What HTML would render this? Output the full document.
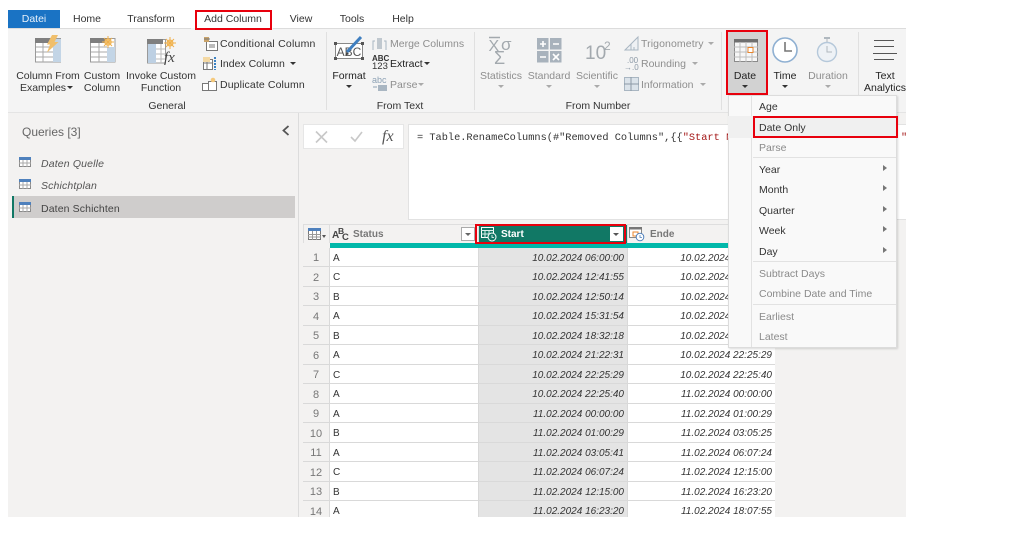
<!DOCTYPE html>
<html><head><meta charset="utf-8"><style>
*{box-sizing:border-box}
html,body{margin:0;padding:0;background:#fff}
body{width:1024px;height:535px;position:relative;overflow:hidden;font-family:"Liberation Sans",sans-serif;font-size:10.5px;color:#333}
.a{position:absolute}
.t{position:absolute;white-space:nowrap;line-height:12px;margin-top:1px}
.c{text-align:center;transform:translateX(-50%)}
.g{color:#8e8e8e}
.rr{position:absolute;border:2px solid #e8000d}
svg{position:absolute;overflow:visible}
.row{position:absolute;left:303px;width:472px;height:19px;background:#d9d9d9}
.x{height:20px}
.row div{position:absolute;top:0;height:18px;line-height:21px;font-size:10px;white-space:nowrap;color:#333}
.x div{height:19px;line-height:22px}
.n{left:0;width:26px;background:#f3f2f1;text-align:center;font-size:11px!important;color:#777!important}
.s{left:27px;width:148px;background:#fff;padding-left:3px}
.d{left:176px;width:148px;background:#e4e4e4;text-align:right;padding-right:3px;font-style:italic}
.e{left:325px;width:147px;background:#fff;text-align:right;padding-right:3px;font-style:italic}
.m{position:absolute;left:759px;white-space:nowrap;line-height:12px;font-size:10.5px;color:#333;margin-top:1px}
.mg{color:#8a8a8a}
.ar{position:absolute;left:883px;width:0;height:0;border-left:4px solid #777;border-top:3.5px solid transparent;border-bottom:3.5px solid transparent}
.sep{position:absolute;left:753px;width:143px;height:1px;background:#e2e2e2}
.dn{position:absolute;width:0;height:0;border-top:3px solid #333;border-left:3px solid transparent;border-right:3px solid transparent}
.dg{border-top-color:#aaa}
.vs{position:absolute;top:32px;width:1px;height:78px;background:#e0e0e0}
</style></head><body>

<!-- tab row -->
<div class="a" style="left:8px;top:10px;width:52px;height:18px;background:#1a73c4"></div>
<div class="t c" style="left:34px;top:12px;color:#e8f1fa">Datei</div>
<div class="t c" style="left:87px;top:12px">Home</div>
<div class="t c" style="left:151px;top:12px">Transform</div>
<div class="t c" style="left:233px;top:12px">Add Column</div>
<div class="t c" style="left:301px;top:12px">View</div>
<div class="t c" style="left:352px;top:12px">Tools</div>
<div class="t c" style="left:403px;top:12px">Help</div>

<!-- ribbon -->
<div class="a" style="left:8px;top:28px;width:898px;height:85px;background:#f4f4f4;border-top:1px solid #dcdcdc;border-bottom:1px solid #e4e4e4"></div>
<div class="a" style="left:191px;top:28px;width:82px;height:2px;background:#f4f4f4"></div>
<div class="vs" style="left:326px"></div>
<div class="vs" style="left:474px"></div>
<div class="vs" style="left:721px"></div>
<div class="vs" style="left:858px"></div>

<!-- Column from examples icon -->
<svg style="left:35px;top:35px" width="27" height="28" viewBox="0 0 27 28"><rect x="0.5" y="3.5" width="25" height="23.5" fill="#fff" stroke="#9a9a9a"/><rect x="0" y="3" width="17" height="5" fill="#7f7f7f"/><rect x="18" y="4" width="8" height="23" fill="#c3d5e6"/><path d="M1 12H18M1 17H18M1 22H18M8 8V27" stroke="#aaa"/><path d="M17 0H23L19.5 7H23.5L12 17.5L15 9.5H12Z" fill="#f0bf6c"/></svg>
<!-- Custom column icon -->
<svg style="left:89px;top:35px" width="27" height="28" viewBox="0 0 27 28"><rect x="1.5" y="3.5" width="24.5" height="23.5" fill="#fff" stroke="#9a9a9a"/><rect x="1" y="3" width="17" height="5" fill="#7f7f7f"/><rect x="18" y="12" width="8" height="15" fill="#c3d5e6"/><path d="M2 12H18M2 17H18M2 22H18M10 8V27" stroke="#aaa"/><circle cx="19" cy="7" r="3.2" fill="#fbe3b2" stroke="#efb04c"/><path d="M19 1V13M13 7H25M15 3L23 11M23 3L15 11" stroke="#efb04c"/></svg>
<!-- Invoke icon -->
<svg style="left:147px;top:35px" width="30" height="29" viewBox="0 0 30 29"><rect x="0.5" y="4.5" width="18" height="23.5" fill="#fff" stroke="#9a9a9a"/><rect x="0" y="4" width="16" height="5" fill="#7f7f7f"/><rect x="1" y="9" width="8" height="19" fill="#bdd0e3"/><path d="M9 14H18M9 19H18M9 24H18M14 9V28" stroke="#bbb"/><circle cx="23" cy="8" r="3" fill="#fbe3b2" stroke="#efb04c"/><path d="M23 2V14M17 8H29M19 4L27 12M27 4L19 12" stroke="#efb04c"/><text x="17" y="27" font-family="Liberation Serif" font-style="italic" font-size="15" fill="#444">fx</text></svg>

<div class="t c" style="left:48px;top:69px">Column From</div>
<div class="t c" style="left:43px;top:81px">Examples</div><div class="dn" style="left:67px;top:86px"></div>
<div class="t c" style="left:102px;top:69px">Custom</div>
<div class="t c" style="left:102px;top:81px">Column</div>
<div class="t c" style="left:161px;top:69px">Invoke Custom</div>
<div class="t c" style="left:161px;top:81px">Function</div>
<div class="t c" style="left:167px;top:99px">General</div>

<!-- small general icons -->
<svg style="left:203px;top:36px" width="15" height="15" viewBox="0 0 15 15"><rect x="3.5" y="5.5" width="11" height="9" fill="#fff" stroke="#777"/><rect x="1" y="1" width="5" height="5" fill="#c9a36a"/><path d="M1 3H7M6 9H12M6 11H12" stroke="#777"/></svg>
<svg style="left:202px;top:56px" width="16" height="15" viewBox="0 0 16 15"><rect x="1.5" y="3.5" width="9" height="10" fill="#fff" stroke="#777"/><path d="M1 7H10M5 4V13" stroke="#777"/><rect x="1" y="1" width="7" height="5" fill="#f4d9a4"/><path d="M13 1V14" stroke="#3b82c4" stroke-width="2" stroke-dasharray="2 1"/></svg>
<svg style="left:202px;top:77px" width="16" height="15" viewBox="0 0 16 15"><rect x="0.5" y="6.5" width="8" height="7" fill="#fff" stroke="#777"/><rect x="6.5" y="4.5" width="8" height="9" fill="#fff" stroke="#777"/><circle cx="11" cy="3" r="2.3" fill="#f5c97c"/></svg>

<div class="t" style="left:220px;top:37px;letter-spacing:.22px">Conditional Column</div>
<div class="t" style="left:220px;top:57px">Index Column</div><div class="dn" style="left:290px;top:62px"></div>
<div class="t" style="left:220px;top:78px;letter-spacing:.12px">Duplicate Column</div>

<!-- Text group -->
<svg style="left:334px;top:35px" width="32" height="26" viewBox="0 0 32 26"><rect x="1.5" y="8.5" width="27" height="15" fill="#fff" stroke="#888"/><rect x="0" y="7" width="3" height="3" fill="#555"/><rect x="27" y="7" width="3" height="3" fill="#555"/><rect x="0" y="22" width="3" height="3" fill="#555"/><rect x="27" y="22" width="3" height="3" fill="#555"/><text x="15" y="21" text-anchor="middle" font-size="12" fill="#555">ABC</text><path d="M13 17L27 2" stroke="#3f7fc0" stroke-width="3"/><path d="M13 17L11 21L15 19Z" fill="#444"/></svg>
<div class="t c" style="left:349px;top:69px;color:#222">Format</div>
<div class="dn" style="left:346px;top:85px"></div>

<svg style="left:372px;top:37px" width="15" height="14" viewBox="0 0 15 14"><path d="M1 13V4H3M14 13V4H12" fill="none" stroke="#a9b6c2"/><rect x="5" y="1" width="5" height="11" fill="#c0c8cf"/></svg>
<div class="t g" style="left:390px;top:37px">Merge Columns</div>
<div class="t" style="left:372px;top:54px;font-size:8px;line-height:8px;font-weight:bold">ABC</div>
<div class="t" style="left:372px;top:61px;font-size:9.5px;line-height:9px">123</div>
<div class="t" style="left:390px;top:57px;color:#222">Extract</div><div class="dn" style="left:424px;top:62px"></div>
<div class="t" style="left:372px;top:75px;font-size:9px;line-height:9px;color:#8ea2b5">abc</div>
<svg style="left:372px;top:85px" width="15" height="6" viewBox="0 0 15 6"><rect x="6" y="0" width="9" height="6" fill="#a9b6c2"/><path d="M1 2H5" stroke="#8ea2b5"/></svg>
<div class="t g" style="left:390px;top:78px">Parse</div><div class="dn dg" style="left:418px;top:83px"></div>
<div class="t c" style="left:400px;top:99px">From Text</div>

<!-- Number group -->
<svg style="left:489px;top:36px" width="26" height="28" viewBox="0 0 26 28"><path d="M0 1.5H11" stroke="#a3a9ae" stroke-width="1.5"/><text x="-0.5" y="15" font-size="16" fill="#a3a9ae">X</text><text x="12" y="14" font-size="17" fill="#a3a9ae">σ</text><text x="5" y="28" font-size="18" fill="#a3a9ae">Σ</text></svg>
<svg style="left:537px;top:38px" width="25" height="25" viewBox="0 0 25 25"><rect x="0" y="0" width="11.5" height="11.5" fill="#a8b2bc"/><rect x="13" y="0" width="11.5" height="11.5" fill="#a8b2bc"/><rect x="0" y="13" width="11.5" height="11.5" fill="#a8b2bc"/><rect x="13" y="13" width="11.5" height="11.5" fill="#a8b2bc"/><path d="M3 6H9M6 3V9M16 6H22M3 19H9M16 16L22 22M22 16L16 22" stroke="#fff" stroke-width="1.6"/></svg>
<div class="t" style="left:585px;top:43px;font-size:19px;line-height:20px;color:#a3a9ae">10</div>
<div class="t" style="left:604px;top:39px;font-size:12px;color:#a3a9ae">2</div>
<div class="t c g" style="left:501px;top:69px">Statistics</div>
<div class="t c g" style="left:549px;top:69px">Standard</div>
<div class="t c g" style="left:597px;top:69px">Scientific</div>
<div class="dn dg" style="left:498px;top:85px"></div>
<div class="dn dg" style="left:546px;top:85px"></div>
<div class="dn dg" style="left:594px;top:85px"></div>
<div class="t c" style="left:598px;top:99px">From Number</div>

<svg style="left:624px;top:36px" width="15" height="15" viewBox="0 0 15 15"><path d="M1 14L14 1V14Z" fill="#eef1f4" stroke="#a9b6c2"/><path d="M7 14V8M10 14V11" stroke="#a9b6c2"/></svg>
<div class="t g" style="left:641px;top:37px;letter-spacing:.1px">Trigonometry</div><div class="dn dg" style="left:708px;top:42px"></div>
<div class="t" style="left:627px;top:56px;font-size:8px;line-height:7px;color:#8c99a6">.00</div>
<div class="t" style="left:624px;top:63px;font-size:8px;line-height:7px;color:#8c99a6">→.0</div>
<div class="t g" style="left:641px;top:57px">Rounding</div><div class="dn dg" style="left:692px;top:62px"></div>
<svg style="left:624px;top:77px" width="15" height="14" viewBox="0 0 15 14"><rect x="0.5" y="0.5" width="14" height="13" fill="#dbe3ea" stroke="#a9b6c2"/><path d="M7 0V14M0 7H15" stroke="#8c99a6"/></svg>
<div class="t g" style="left:641px;top:78px">Information</div><div class="dn dg" style="left:700px;top:83px"></div>

<!-- Date highlighted -->
<div class="a" style="left:727px;top:31px;width:39px;height:63px;background:#d2d2d2"></div>
<svg style="left:734px;top:39px" width="24" height="23" viewBox="0 0 24 23"><rect x="0.5" y="0.5" width="23" height="22" fill="#f7f7f7" stroke="#8a8a8a"/><rect x="0" y="0" width="24" height="3.5" fill="#6f6f6f"/><path d="M0 8H24M0 13H24M0 18H24M6 3V23M12 3V23M18 3V23" stroke="#bdbdbd"/><rect x="14" y="8.5" width="5" height="5" fill="#fff" stroke="#e8852c"/></svg>
<div class="t c" style="left:745px;top:69px;color:#222">Date</div>
<div class="dn" style="left:742px;top:85px"></div>
<div class="rr" style="left:726px;top:30px;width:42px;height:65px"></div>

<svg style="left:772px;top:37px" width="26" height="26" viewBox="0 0 26 26"><circle cx="13" cy="13" r="12" fill="#fff" stroke="#8fb0d2" stroke-width="1.6"/><path d="M13 5V14H20" fill="none" stroke="#777" stroke-width="1.6"/></svg>
<div class="t c" style="left:785px;top:69px;color:#222">Time</div>
<div class="dn" style="left:782px;top:85px"></div>
<svg style="left:817px;top:37px" width="20" height="26" viewBox="0 0 20 26"><circle cx="10" cy="15" r="9.5" fill="#eef2f6" stroke="#b5c8da" stroke-width="1.4"/><rect x="7" y="0" width="6" height="2" fill="#b0b8bf"/><path d="M10 2V5M10 9V15H15" fill="none" stroke="#b0b8bf"/></svg>
<div class="t c g" style="left:828px;top:69px">Duration</div>
<div class="dn dg" style="left:825px;top:85px"></div>

<svg style="left:873px;top:40px" width="26" height="20" viewBox="0 0 26 20"><path d="M1 .5H21M1 6.5H21M0 13.5H24M1 19.5H21" stroke="#555" stroke-width="1"/></svg>
<div class="t c" style="left:885px;top:69px;color:#222">Text</div>
<div class="a" style="left:860px;top:81px;width:46px;height:14px;overflow:hidden"><div class="t" style="left:4px;top:0;color:#222">Analytics</div></div>

<!-- left pane -->
<div class="a" style="left:8px;top:113px;width:898px;height:404px;background:#f3f2f1"></div>
<div class="a" style="left:298px;top:113px;width:1px;height:404px;background:#dcdcdc"></div>
<div class="t" style="left:22px;top:125px;font-size:12px;color:#666">Queries [3]</div>
<svg style="left:282px;top:125px" width="8" height="11" viewBox="0 0 8 11"><path d="M6.5 1L1.5 5.5L6.5 10" fill="none" stroke="#555" stroke-width="1.8"/></svg>
<div class="a" style="left:12px;top:196px;width:283px;height:22px;background:#cfcdcc"></div>
<div class="a" style="left:12px;top:196px;width:2px;height:22px;background:#117865"></div>
<svg style="left:19px;top:157px" width="12" height="10" viewBox="0 0 12 10"><rect x=".5" y=".5" width="11" height="9" fill="#fff" stroke="#8a8a8a"/><rect width="12" height="3" fill="#4f81bd"/><path d="M0 6H12M4 3V10M8 3V10" stroke="#aaa"/></svg>
<svg style="left:19px;top:179px" width="12" height="10" viewBox="0 0 12 10"><rect x=".5" y=".5" width="11" height="9" fill="#fff" stroke="#8a8a8a"/><rect width="12" height="3" fill="#4f81bd"/><path d="M0 6H12M4 3V10M8 3V10" stroke="#aaa"/></svg>
<svg style="left:19px;top:202px" width="12" height="10" viewBox="0 0 12 10"><rect x=".5" y=".5" width="11" height="9" fill="#fff" stroke="#8a8a8a"/><rect width="12" height="3" fill="#4f81bd"/><path d="M0 6H12M4 3V10M8 3V10" stroke="#aaa"/></svg>
<div class="t" style="left:41px;top:157px;font-style:italic;color:#555;letter-spacing:.15px">Daten Quelle</div>
<div class="t" style="left:41px;top:179px;font-style:italic;color:#555;letter-spacing:.15px">Schichtplan</div>
<div class="t" style="left:41px;top:202px;color:#444;letter-spacing:.12px">Daten Schichten</div>

<!-- formula bar -->
<div class="a" style="left:303px;top:124px;width:101px;height:25px;background:#fff;border:1px solid #e6e6e6"></div>
<svg style="left:315px;top:131px" width="13" height="12" viewBox="0 0 13 12"><path d="M1 0.5L12 11.5M12 0.5L1 11.5" stroke="#c8c8c8" stroke-width="1.6"/></svg>
<svg style="left:350px;top:131px" width="13" height="11" viewBox="0 0 13 11"><path d="M1 6L5 10L12 1" fill="none" stroke="#c8c8c8" stroke-width="1.6"/></svg>
<div class="t" style="left:382px;top:128px;font-family:'Liberation Serif',serif;font-style:italic;font-size:16px;line-height:16px;color:#555">fx</div>
<div class="a" style="left:408px;top:124px;width:498px;height:96px;background:#fff;border:1px solid #e2e2e2;border-right:0"></div>
<div class="t" style="left:417px;top:131px;font-family:'Liberation Mono',monospace;font-size:10.3px">= Table.RenameColumns(#"Removed Columns",{{<span style="color:#a31515">"Start N</span></div>
<div class="t" style="left:901px;top:131px;font-family:'Liberation Mono',monospace;font-size:10.3px;color:#a31515">"</div>

<!-- table header -->
<div class="a" style="left:303px;top:224px;width:472px;height:24px;background:#dedede"></div>
<div class="a" style="left:304px;top:225px;width:25px;height:18px;background:#f3f2f1"></div>
<div class="a" style="left:330px;top:225px;width:148px;height:18px;background:#f3f2f1"></div>
<div class="a" style="left:479px;top:225px;width:148px;height:18px;background:#117865"></div>
<div class="a" style="left:628px;top:225px;width:147px;height:18px;background:#f3f2f1"></div>
<div class="a" style="left:330px;top:243px;width:445px;height:5px;background:#01b8aa"></div>
<div class="a" style="left:303px;top:243px;width:27px;height:5px;background:#f3f2f1"></div>
<svg style="left:308px;top:228px" width="18" height="12" viewBox="0 0 18 12"><rect x=".5" y=".5" width="12" height="11" fill="#fff" stroke="#777"/><rect width="13" height="3" fill="#4f81bd"/><path d="M0 6.5H13M0 9H13M4.5 3V12M8.5 3V12" stroke="#999"/><path d="M14 7H18L16 10Z" fill="#555"/></svg>
<div class="t" style="left:332px;top:229px;font-size:10px;font-weight:bold;color:#444">A</div>
<div class="t" style="left:338px;top:224px;font-size:8.5px;font-weight:bold;color:#444">B</div>
<div class="t" style="left:342px;top:231px;font-size:9.5px;font-weight:bold;color:#444">C</div>
<div class="t" style="left:353px;top:228px;font-weight:bold;font-size:10px;color:#777">Status</div>
<div class="a" style="left:461px;top:227px;width:14px;height:14px;background:#fff;border:1px solid #aaa"></div>
<div class="dn" style="left:465px;top:233px;border-top-color:#666"></div>
<svg style="left:481px;top:227px" width="16" height="15" viewBox="0 0 16 15"><rect x=".5" y=".5" width="12" height="10" fill="none" stroke="#fff"/><path d="M0 3.5H13M0 7H13M4 3V11M8 3V11" stroke="#d8eee9"/><circle cx="11" cy="10" r="4" fill="#117865" stroke="#fff"/><path d="M11 8V10.5H13" fill="none" stroke="#fff" stroke-width=".8"/></svg>
<div class="t" style="left:501px;top:228px;font-weight:bold;font-size:10px;color:#fff">Start</div>
<div class="a" style="left:610px;top:227px;width:13px;height:14px;background:#fff"></div>
<div class="dn" style="left:613px;top:233px;border-top-color:#555"></div>
<svg style="left:629px;top:227px" width="16" height="15" viewBox="0 0 16 15"><rect x=".5" y=".5" width="12" height="10" fill="#fff" stroke="#888"/><rect width="13" height="2.5" fill="#777"/><path d="M4 5H9V9H4Z" fill="none" stroke="#e8852c"/><circle cx="11" cy="10" r="3.8" fill="#fff" stroke="#4f81bd"/><path d="M11 8V10.5H13" fill="none" stroke="#4f81bd" stroke-width=".8"/></svg>
<div class="t" style="left:650px;top:228px;font-weight:bold;font-size:10px;color:#777">Ende</div>

<!-- rows -->
<div class="row" style="top:248px"><div class="n">1</div><div class="s">A</div><div class="d">10.02.2024 06:00:00</div><div class="e">10.02.2024 12:41:55</div></div>
<div class="row x" style="top:267px"><div class="n">2</div><div class="s">C</div><div class="d">10.02.2024 12:41:55</div><div class="e">10.02.2024 12:50:14</div></div>
<div class="row" style="top:287px"><div class="n">3</div><div class="s">B</div><div class="d">10.02.2024 12:50:14</div><div class="e">10.02.2024 15:31:54</div></div>
<div class="row x" style="top:306px"><div class="n">4</div><div class="s">A</div><div class="d">10.02.2024 15:31:54</div><div class="e">10.02.2024 18:32:18</div></div>
<div class="row" style="top:326px"><div class="n">5</div><div class="s">B</div><div class="d">10.02.2024 18:32:18</div><div class="e">10.02.2024 21:22:31</div></div>
<div class="row x" style="top:345px"><div class="n">6</div><div class="s">A</div><div class="d">10.02.2024 21:22:31</div><div class="e">10.02.2024 22:25:29</div></div>
<div class="row" style="top:365px"><div class="n">7</div><div class="s">C</div><div class="d">10.02.2024 22:25:29</div><div class="e">10.02.2024 22:25:40</div></div>
<div class="row x" style="top:384px"><div class="n">8</div><div class="s">A</div><div class="d">10.02.2024 22:25:40</div><div class="e">11.02.2024 00:00:00</div></div>
<div class="row" style="top:404px"><div class="n">9</div><div class="s">A</div><div class="d">11.02.2024 00:00:00</div><div class="e">11.02.2024 01:00:29</div></div>
<div class="row x" style="top:423px"><div class="n">10</div><div class="s">B</div><div class="d">11.02.2024 01:00:29</div><div class="e">11.02.2024 03:05:25</div></div>
<div class="row" style="top:443px"><div class="n">11</div><div class="s">A</div><div class="d">11.02.2024 03:05:41</div><div class="e">11.02.2024 06:07:24</div></div>
<div class="row x" style="top:462px"><div class="n">12</div><div class="s">C</div><div class="d">11.02.2024 06:07:24</div><div class="e">11.02.2024 12:15:00</div></div>
<div class="row" style="top:482px"><div class="n">13</div><div class="s">B</div><div class="d">11.02.2024 12:15:00</div><div class="e">11.02.2024 16:23:20</div></div>
<div class="row x" style="top:501px;height:16px;overflow:hidden"><div class="n">14</div><div class="s">A</div><div class="d">11.02.2024 16:23:20</div><div class="e">11.02.2024 18:07:55</div></div>

<!-- red boxes -->
<div class="rr" style="left:195px;top:10px;width:77px;height:20px"></div>
<div class="rr" style="left:475px;top:224px;width:151px;height:20px"></div>

<!-- dropdown menu -->
<div class="a" style="left:728px;top:95px;width:169px;height:253px;background:#f9f9f9;border:1px solid #dcdcdc;box-shadow:1px 1px 2px rgba(0,0,0,.15)"></div>
<div class="a" style="left:751px;top:96px;width:1px;height:251px;background:#e2e2e2"></div>
<div class="a" style="left:728px;top:116px;width:169px;height:22px;background:#f0f0f0"></div>
<div class="m" style="top:100px">Age</div>
<div class="m" style="top:121px">Date Only</div>
<div class="m mg" style="top:141px">Parse</div>
<div class="sep" style="top:157px"></div>
<div class="m" style="top:163px">Year</div><div class="ar" style="top:165px"></div>
<div class="m" style="top:183px">Month</div><div class="ar" style="top:185px"></div>
<div class="m" style="top:204px">Quarter</div><div class="ar" style="top:206px"></div>
<div class="m" style="top:224px">Week</div><div class="ar" style="top:226px"></div>
<div class="m" style="top:245px">Day</div><div class="ar" style="top:247px"></div>
<div class="sep" style="top:261px"></div>
<div class="m mg" style="top:267px">Subtract Days</div>
<div class="m mg" style="top:287px">Combine Date and Time</div>
<div class="sep" style="top:304px"></div>
<div class="m mg" style="top:310px">Earliest</div>
<div class="m mg" style="top:330px">Latest</div>
<div class="rr" style="left:753px;top:116px;width:145px;height:22px"></div>

</body></html>
